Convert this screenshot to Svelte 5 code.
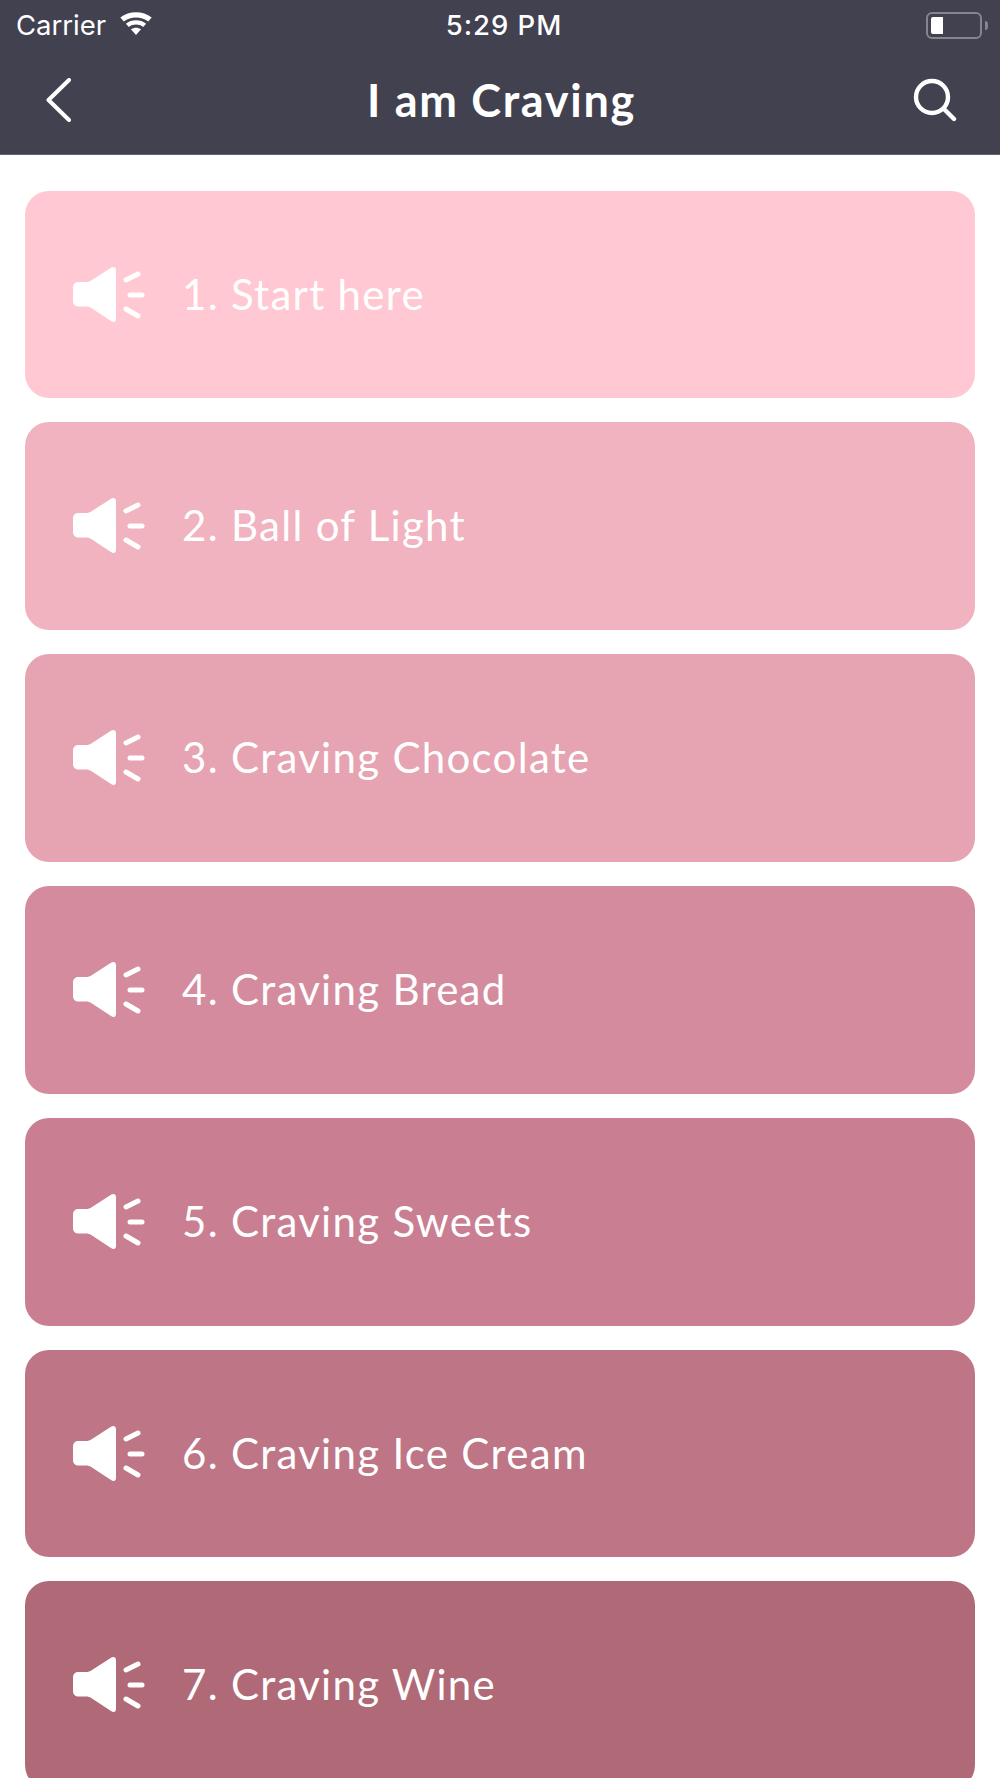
<script>
  const tracks = [
    { title: '1. Start here', color: '#ffc8d2' },
    { title: '2. Ball of Light', color: '#f1b3c0' },
    { title: '3. Craving Chocolate', color: '#e6a3b2' },
    { title: '4. Craving Bread', color: '#d48b9d' },
    { title: '5. Craving Sweets', color: '#c97e91' },
    { title: '6. Craving Ice Cream', color: '#be7586' },
    { title: '7. Craving Wine', color: '#b06977' }
  ];
</script>

<div class="page">
  <header class="header">
    <div class="status">
      <div class="status-left">
        <span>Carrier</span>
        <svg class="wifi" viewBox="0 0 36 26" fill="#fff" aria-hidden="true">
          <path d="M18 25 L12.5 18.8 C15.6 16.4 20.4 16.4 23.5 18.8 Z" />
          <path d="M10.3 16.3 L7 12.6 C13 7.6 23 7.6 29 12.6 L25.7 16.3 C21.2 12.8 14.8 12.8 10.3 16.3 Z" />
          <path d="M4.8 10.2 L1 6 C10.5 -1.6 25.5 -1.6 35 6 L31.2 10.2 C23.6 4.4 12.4 4.4 4.8 10.2 Z" />
        </svg>
      </div>
      <span class="time">5:29 PM</span>
      <div class="battery">
        <div class="battery-body"><div class="battery-level"></div></div>
        <div class="battery-cap"></div>
      </div>
    </div>
    <nav class="nav">
      <svg class="back" viewBox="0 0 26 44" fill="none" stroke="#fff" stroke-width="4" stroke-linecap="round" stroke-linejoin="round" aria-hidden="true">
        <path d="M23 2 L2.500 22 L23 42" />
      </svg>
      <h1>I am Craving</h1>
      <svg class="search" viewBox="0 0 44 44" fill="none" stroke="#fff" stroke-width="4.4" stroke-linecap="round" aria-hidden="true">
        <circle cx="19" cy="19" r="16" />
        <path d="M31 31 L41 41" />
      </svg>
    </nav>
  </header>

  <main class="list">
    {#each tracks as track (track.title)}
      <div class="card" style="background: {track.color}">
        <svg class="speaker" viewBox="0 0 72 56" fill="#fff" stroke-linecap="round" aria-hidden="true">
          <path d="M6 15 H13 C15 15 17 14.500 19 13 L38 .8 C40.600 -.8 43 .6 43 3 V52 C43 55 40.600 55.800 38 54 L19 41.500 C17 40 15 39.500 13 39.500 H6 C2 39.500 0 37.500 0 34 V20.500 C0 17 2 15 6 15 Z" />
          <g stroke="#fff" stroke-width="5" fill="none">
            <path d="M53 13 L65 7" />
            <path d="M57 28 H69" />
            <path d="M53 42 L65 49" />
          </g>
        </svg>
        <span class="title">{track.title}</span>
      </div>
    {/each}
  </main>
</div>

<style>
  :global(body) { background: #fff; }

  .page {
    height: 1778px;
    overflow: hidden;
    font-family: Lato, "Open Sans", sans-serif;
  }

  .header {
    background: #42414f;
    color: #fff;
    height: 155px;
    box-sizing: border-box;
    border-bottom: 1px solid #62616e;
  }

  .status {
    height: 50px;
    padding: 0 12px 0 16px;
    display: grid;
    grid-template-columns: 1fr auto 1fr;
    align-items: center;
    font-family: Inter, "Noto Sans", sans-serif;
    font-size: 27.5px;
  }
  .status-left { display: flex; align-items: center; gap: 13px; }
  .wifi { width: 34px; height: 24px; margin-bottom: 3px; }
  .time { font-weight: 500; font-size: 27.5px; letter-spacing: 1px; margin-left: 4px; }

  .battery { display: flex; align-items: center; justify-content: flex-end; gap: 3px; }
  .battery-body {
    width: 56px;
    height: 27px;
    box-sizing: border-box;
    border: 2px solid #85848f;
    border-radius: 6px;
    padding: 3px;
  }
  .battery-level { width: 12px; height: 100%; background: #fff; border-radius: 2px 0 0 2px; }
  .battery-cap {
    width: 3px;
    height: 9px;
    background: #85848f;
    border-radius: 0 3px 3px 0;
  }

  .nav {
    height: 104px;
    padding: 0 43px 0 46px;
    display: grid;
    grid-template-columns: 1fr auto 1fr;
    align-items: center;
  }
  .back { width: 26px; height: 44px; margin-bottom: 4px; }
  .search { width: 44px; height: 44px; margin-bottom: 4px; justify-self: end; }
  h1 {
    margin: 0 0 4px;
    font-size: 45px;
    font-weight: 700;
    line-height: 1;
    letter-spacing: 1.7px;
  }

  .list {
    padding: 35.7px 25px 0;
    display: flex;
    flex-direction: column;
    gap: 24px;
  }

  .card {
    height: 207.8px;
    flex-shrink: 0;
    border-radius: 24px;
    padding-left: 48px;
    display: flex;
    align-items: center;
    gap: 37px;
    color: #fff;
  }
  .speaker { width: 72px; height: 56px; flex-shrink: 0; }
  .title { font-size: 42px; font-weight: 400; letter-spacing: 1.3px; margin-bottom: 2px; }
</style>
